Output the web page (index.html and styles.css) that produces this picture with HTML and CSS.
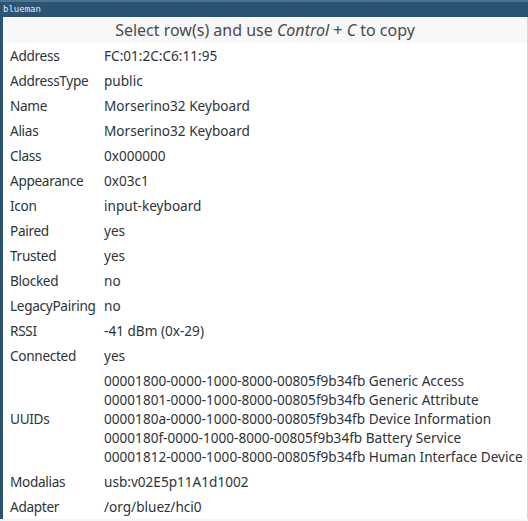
FILE: index.html
```html
<!DOCTYPE html>
<html>
<head>
<meta charset="utf-8">
<link rel="stylesheet" href="styles.css">
</head>
<body>
<div class="frame">
  <div class="titlebar">blueman</div>
  <div class="window">
    <div class="header">Select row(s) and use <i>Control</i> + <i>C</i> to copy</div>
    <div class="list">
      <div class="row"><div class="key">Address</div><div class="val">FC:01:2C:C6:11:95</div></div>
      <div class="row"><div class="key">AddressType</div><div class="val">public</div></div>
      <div class="row"><div class="key">Name</div><div class="val">Morserino32 Keyboard</div></div>
      <div class="row"><div class="key">Alias</div><div class="val">Morserino32 Keyboard</div></div>
      <div class="row"><div class="key">Class</div><div class="val">0x000000</div></div>
      <div class="row"><div class="key">Appearance</div><div class="val">0x03c1</div></div>
      <div class="row"><div class="key">Icon</div><div class="val">input-keyboard</div></div>
      <div class="row"><div class="key">Paired</div><div class="val">yes</div></div>
      <div class="row"><div class="key">Trusted</div><div class="val">yes</div></div>
      <div class="row"><div class="key">Blocked</div><div class="val">no</div></div>
      <div class="row"><div class="key">LegacyPairing</div><div class="val">no</div></div>
      <div class="row"><div class="key">RSSI</div><div class="val">-41 dBm (0x-29)</div></div>
      <div class="row"><div class="key">Connected</div><div class="val">yes</div></div>
      <div class="row"><div class="key">UUIDs</div><div class="val">00001800-0000-1000-8000-00805f9b34fb Generic Access<br>00001801-0000-1000-8000-00805f9b34fb Generic Attribute<br>0000180a-0000-1000-8000-00805f9b34fb Device Information<br>0000180f-0000-1000-8000-00805f9b34fb Battery Service<br>00001812-0000-1000-8000-00805f9b34fb Human Interface Device</div></div>
      <div class="row"><div class="key">Modalias</div><div class="val">usb:v02E5p11A1d1002</div></div>
      <div class="row"><div class="key">Adapter</div><div class="val">/org/bluez/hci0</div></div>
    </div>
  </div>
</div>
</body>
</html>
```

FILE: styles.css
```css
html, body {
  margin: 0;
  padding: 0;
  background: #f6f6f5;
}
.frame {
  width: 528px;
  height: 521px;
  overflow: hidden;
  display: flex;
  flex-direction: column;
}
.titlebar {
  height: 15px;
  border-top: 2px solid #4d7393;
  background: #2b5374;
  color: #e4e8ec;
  font-family: "DejaVu Sans Mono", monospace;
  font-size: 9px;
  line-height: 15px;
  padding-left: 3px;
}
.window {
  flex: 1;
  border-left: 3px solid #2b5374;
  border-right: 1px solid #d6d6d6;
  background: #ffffff;
  display: flex;
  flex-direction: column;
  margin-bottom: 2px;
}
.header {
  height: 26px;
  background: #f8f8f8;
  color: #4a4a4a;
  font-family: "Noto Sans", sans-serif;
  font-size: 16px;
  line-height: 26px;
  text-align: center;
}
.list {
  display: flex;
  flex-direction: column;
  font-family: "Noto Sans", sans-serif;
  font-size: 13.6px;
  color: #2e3436;
  line-height: 19px;
}
.row {
  display: flex;
  align-items: center;
  padding: 3px 0;
}
.key {
  width: 94px;
  padding-left: 7px;
  flex: none;
  letter-spacing: -0.3px;
}
.val {
  white-space: nowrap;
}
```
